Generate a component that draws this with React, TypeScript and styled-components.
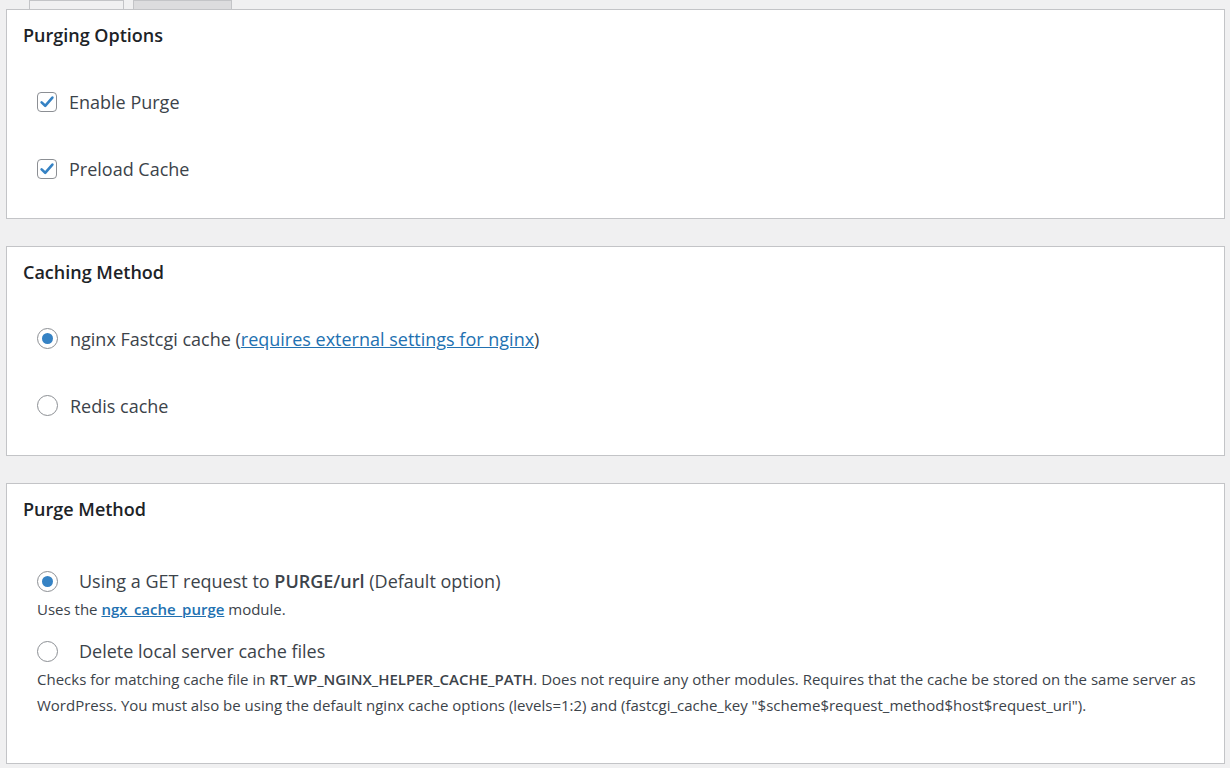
import * as React from "react";
import styled, { createGlobalStyle } from "styled-components";

const GlobalStyle = createGlobalStyle`
  html, body {
    margin: 0;
    padding: 0;
    background: #f0f0f1;
  }
  body {
    font-family: "Open Sans", "Noto Sans", sans-serif;
    color: #3c434a;
  }
`;

const Page = styled.div`
  width: 1230px;
  height: 768px;
  overflow: hidden;
  box-sizing: border-box;
  padding: 0 5px 0 6px;
`;

const Tabs = styled.nav`
  display: flex;
  gap: 9px;
  height: 9px;
  padding-left: 23px;
`;

const Tab = styled.div<{ $active?: boolean }>`
  width: ${(p) => (p.$active ? 93 : 97)}px;
  border: 1px solid #c3c4c7;
  border-bottom: none;
  background: ${(p) => (p.$active ? "#f0f0f1" : "#dcdcde")};
`;

const Panel = styled.section`
  background: #fff;
  border: 1px solid #c3c4c7;
  padding: 0 16px 16px;
  margin-bottom: 27px;
`;

const Heading = styled.h3`
  margin: 0;
  padding: 12px 0 10px;
  font-size: 18px;
  line-height: 26px;
  font-weight: 600;
  color: #1d2327;
`;

const Options = styled.div`
  padding: 10px 0 0 14px;
`;

const OptionRow = styled.label`
  display: flex;
  align-items: center;
  gap: 12px;
  height: 67px;
  font-size: 18px;
`;

const Box = styled.span`
  display: inline-flex;
  align-items: center;
  justify-content: center;
  width: 20px;
  height: 20px;
  box-sizing: border-box;
  border: 1px solid #8c8f94;
  border-radius: 4px;
  background: #fff;
`;

const Radio = styled.span<{ $checked?: boolean }>`
  display: inline-flex;
  align-items: center;
  justify-content: center;
  width: 21px;
  height: 21px;
  box-sizing: border-box;
  border: 1px solid #8c8f94;
  border-radius: 50%;
  background: #fff;
  flex-shrink: 0;

  &::after {
    content: "";
    display: ${(p) => (p.$checked ? "block" : "none")};
    width: 11px;
    height: 11px;
    border-radius: 50%;
    background: #3582c4;
  }
`;

const Link = styled.a<{ $bold?: boolean }>`
  color: #2271b1;
  text-decoration: underline;
  font-weight: ${(p) => (p.$bold ? 600 : 400)};
`;

const Strong = styled.strong`
  font-weight: 600;
`;

const MethodList = styled.div`
  padding: 35px 0 29px 14px;
`;

const MethodRow = styled.label<{ $spaced?: boolean }>`
  display: flex;
  align-items: center;
  gap: 21px;
  height: 28px;
  margin-top: ${(p) => (p.$spaced ? 15 : 0)}px;
  font-size: 18px;
`;

const Note = styled.p`
  margin: 1px 0 0;
  font-size: 15px;
  line-height: 26px;
  max-width: 1165px;
`;

const Check = () => (
  <Box>
    <svg width="16" height="16" viewBox="0 0 16 16">
      <path
        d="M2.6 8.4 L6.2 11.8 L13.4 3.6"
        fill="none"
        stroke="#3582c4"
        strokeWidth="2.6"
        strokeLinecap="round"
        strokeLinejoin="round"
      />
    </svg>
  </Box>
);

export default function App() {
  return (
    <Page>
      <GlobalStyle />
      <Tabs>
        <Tab $active />
        <Tab />
      </Tabs>

      <Panel>
        <Heading>Purging Options</Heading>
        <Options>
          <OptionRow>
            <Check />
            Enable Purge
          </OptionRow>
          <OptionRow>
            <Check />
            Preload Cache
          </OptionRow>
        </Options>
      </Panel>

      <Panel>
        <Heading>Caching Method</Heading>
        <Options>
          <OptionRow>
            <Radio $checked />
            <span>
              nginx Fastcgi cache (<Link>requires external settings for nginx</Link>)
            </span>
          </OptionRow>
          <OptionRow>
            <Radio />
            Redis cache
          </OptionRow>
        </Options>
      </Panel>

      <Panel>
        <Heading>Purge Method</Heading>
        <MethodList>
          <MethodRow>
            <Radio $checked />
            <span>
              Using a GET request to <Strong>PURGE/url</Strong> (Default option)
            </span>
          </MethodRow>
          <Note>
            Uses the <Link $bold>ngx_cache_purge</Link> module.
          </Note>
          <MethodRow $spaced>
            <Radio />
            Delete local server cache files
          </MethodRow>
          <Note>
            Checks for matching cache file in <Strong>RT_WP_NGINX_HELPER_CACHE_PATH</Strong>. Does
            not require any other modules. Requires that the cache be stored on the same server as
            WordPress. You must also be using the default nginx cache options (levels=1:2) and
            (fastcgi_cache_key "$scheme$request_method$host$request_uri").
          </Note>
        </MethodList>
      </Panel>
    </Page>
  );
}
